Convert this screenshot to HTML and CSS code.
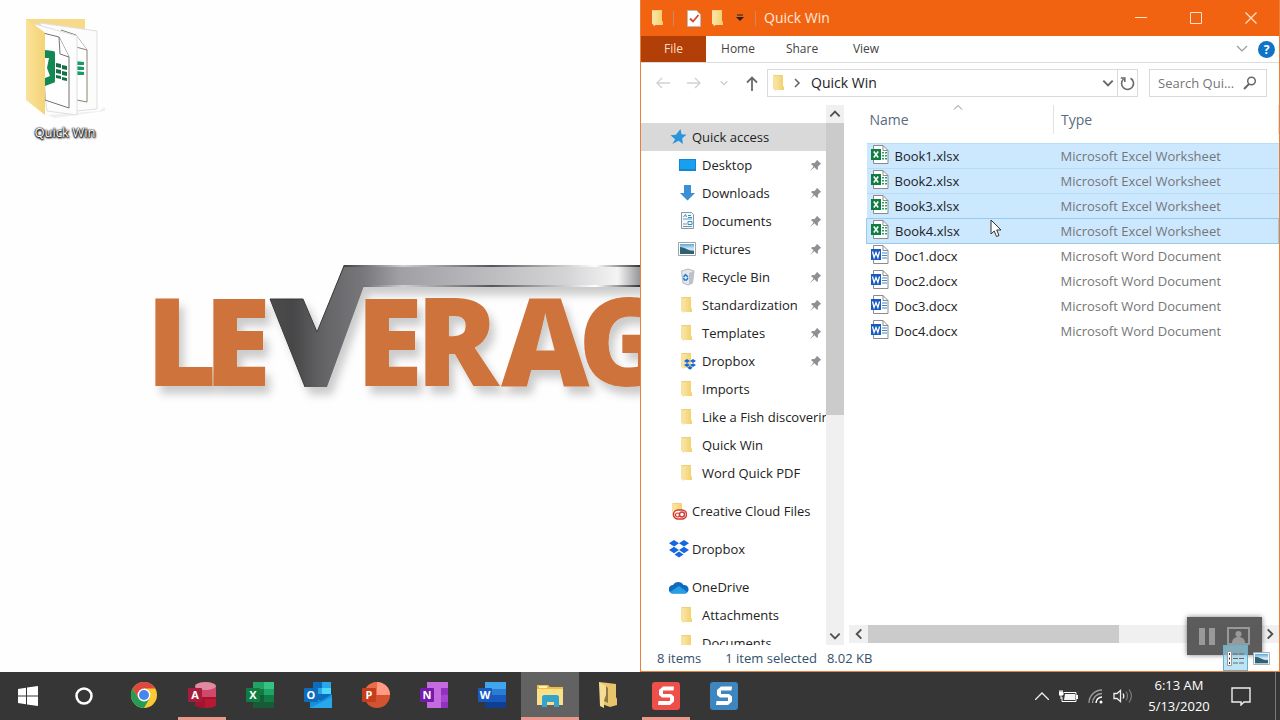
FILE: index.html
```html
<!DOCTYPE html>
<html lang="en">
<head>
<meta charset="utf-8">
<meta name="viewport" content="width=device-width, initial-scale=1">
<title>Quick Win</title>
<link rel="stylesheet" href="styles.css">
</head>
<body>
<svg class="defs" aria-hidden="true">
  <defs>
    <linearGradient id="gold" x1="0" x2="1"><stop offset="0" stop-color="#f9e3a0"/><stop offset="1" stop-color="#f3cf6b"/></linearGradient>
    <linearGradient id="sky" x1="0" y1="0" x2="0" y2="1"><stop offset="0" stop-color="#5aa7dc"/><stop offset=".5" stop-color="#d8ecf5"/><stop offset="1" stop-color="#3f6f6a"/></linearGradient>
  </defs>
  <symbol id="folder" viewBox="0 0 16 18"><path d="M3 1h10v13H3z" fill="#efcf78"/><path d="M3 1l3 1.500v15l-3-3z" fill="#f8e2a2"/><path d="M5.500 2H13v10.500h1V16H5.500z" fill="url(#gold)"/></symbol>
  <symbol id="pin" viewBox="0 0 14 14"><path d="M8.500.8l4.700 4.700-1.400.5-2.300 2.300c.4 1.600.1 2.700-.7 3.500L5.900 9 1 13l3.900-5L2.200 5.300c.9-.8 2-1.100 3.500-.7L8 2.200z" fill="#8b9196"/></symbol>
  <symbol id="dropbox" viewBox="0 0 20 18"><path d="M5 0l5 3.200-5 3.200L0 3.200zM15 0l5 3.200-5 3.200-5-3.200zM5 6.800L10 10l-5 3.200L0 10zM15 6.800l5 3.200-5 3.200-5-3.200zM10 11.600l4.500 2.900L10 17.600l-4.500-3.100z" fill="#1668e0"/></symbol>
  <symbol id="picture" viewBox="0 0 18 14"><path d="M.5.5h17v13H.5z" fill="#fff" stroke="#9aa5ad"/><path d="M2 2h14v10H2z" fill="url(#sky)"/><path d="M2 5c5 0 8 4 14 4v3H2z" fill="#2f6173"/></symbol>
  <symbol id="xlsx" viewBox="0 0 18 20"><path d="M2.500.5h9.500l5 5v13H2.500z" fill="#fff" stroke="#8b8b8b"/><path d="M12 .5v5h5" fill="none" stroke="#8b8b8b"/><path d="M11 7h2v1.500h-2zM14 7h2v1.500h-2zM11 10h2v1.500h-2zM14 10h2v1.500h-2zM11 13h2v1.500h-2zM14 13h2v1.500h-2z" fill="#21a366"/><path d="M0 4h10v11H0z" fill="#107c41"/><path d="M2.800 6.500l4.400 6M7.200 6.500l-4.400 6" stroke="#fff" stroke-width="1.600"/></symbol>
  <symbol id="docx" viewBox="0 0 18 20"><path d="M2.500.5h9.500l5 5v13H2.500z" fill="#fff" stroke="#8b8b8b"/><path d="M12 .5v5h5" fill="none" stroke="#8b8b8b"/><path d="M11 8h5M11 10.500h5M11 13h5" stroke="#3f86cf"/><path d="M0 4h10v11H0z" fill="#185abd"/><path d="M1.500 6.500l1.600 6L5 7.500l1.900 5 1.600-6" fill="none" stroke="#fff" stroke-width="1.300"/></symbol>
  <symbol id="chev" viewBox="0 0 12 12"><path d="M2 4l4 4 4-4" fill="none" stroke="currentColor" stroke-width="1.600"/></symbol>
  <symbol id="snag" viewBox="0 0 28 28"><rect width="28" height="28" rx="3" fill="currentColor"/><path d="M22 4.500H11L7 8v5l3 2.500h8v3.500H6.500l-.5 4h12l4-3.500v-5L19 12h-8V8.500h10.500z" fill="#fff"/></symbol>
</svg>

<main class="desktop">
  <section class="wallpaper">
    <a class="shortcut" href="#">
      <svg viewBox="0 0 80 102" aria-hidden="true">
        <defs><linearGradient id="flap" x1="0" x2="1"><stop offset="0" stop-color="#fbe29a"/><stop offset="1" stop-color="#f3d375"/></linearGradient></defs>
        <path d="M22 98l52-4 6-4v4l-50 7z" fill="#efefef"/>
        <path d="M1 2h59v80H1z" fill="#f6da8a"/>
        <path d="M15 6l57 8v78l-30 3z" fill="#fcfcfc" stroke="#dfdfdf"/>
        <path d="M36 13l15 5 11 15v52l-20-4" fill="#fff" stroke="#8a8272"/>
        <path d="M51 18v12l11 3" fill="#fff" stroke="#8a8272"/>
        <path d="M50 44l9 1v3h-9zM50 49l9 1v3h-9zM50 54l9 1v3h-9z" fill="#179b67"/>
        <path d="M10 7l42 12v79l-30-4z" fill="#fdfdfd" stroke="#dedede"/>
        <path d="M18 16l16 4 10 20v51l-24-8z" fill="#fff" stroke="#77736b"/>
        <path d="M34 20l1 17 9 3" fill="#fff" stroke="#77736b"/>
        <path d="M20 33l8 1q2 0 2 2v28q0 2-2 2l-8 3z" fill="#138850"/>
        <path d="M20 41h4l-2 10 3 8-5 2z" fill="#fff"/>
        <path d="M31 46l5 1v4l-5-1zM37 48l5 1v4l-5-1zM31 52l5 1v4l-5-1zM37 54l5 1v4l-5-1zM31 58l5 1v3l-5-1zM37 60l5 1v3l-5-1z" fill="#176f47"/>
        <path d="M1 2l17 12c2 2 2 3 2 5v79L1 83z" fill="url(#flap)"/>
      </svg>
      <span>Quick Win</span>
    </a>
    <svg class="logo" viewBox="0 0 500 160" role="img" aria-label="Leverage">
      <defs>
        <linearGradient id="steel" gradientUnits="userSpaceOnUse" x1="130" x2="500" y1="0" y2="0"><stop offset="0" stop-color="#4c4c4c"/><stop offset=".06" stop-color="#464647"/><stop offset=".14" stop-color="#636365"/><stop offset=".25" stop-color="#77777b"/><stop offset=".35" stop-color="#a0a0a4"/><stop offset=".8" stop-color="#d4d4d7"/><stop offset=".94" stop-color="#f4f4f4"/><stop offset="1" stop-color="#96969a"/></linearGradient>
        <linearGradient id="edge" gradientUnits="userSpaceOnUse" x1="204" x2="500" y1="0" y2="0"><stop offset="0" stop-color="#404042"/><stop offset=".2" stop-color="#cfcfd1"/><stop offset=".5" stop-color="#555"/><stop offset=".85" stop-color="#fff"/><stop offset="1" stop-color="#333"/></linearGradient>
        <filter id="cast" x="-10%" y="-10%" width="120%" height="130%"><feDropShadow dx="5" dy="8" stdDeviation="4" flood-color="#000" flood-opacity=".2"/></filter>
      </defs>
      <g filter="url(#cast)">
        <g class="logo-text">
          <text x="6" y="136">L</text><text x="64" y="136">E</text>
          <text x="216" y="136">E</text><text x="276" y="136">R</text><text x="361" y="136">A</text><text x="438" y="136">G</text>
        </g>
        <path d="M130 49h33l14 33 27-67h310v21H224L187 137h-22z" fill="url(#steel)"/>
        <path d="M130 49h33l14 33 27-66M165 137L130 49" fill="none" stroke="#3c3c3e"/>
        <path d="M204 15h310v2H203zM224 35h290v2H223z" fill="url(#edge)"/>
      </g>
    </svg>
  </section>

  <section class="window">
    <header class="titlebar">
      <svg class="i-folder"><use href="#folder"/></svg>
      <i class="tick"></i>
      <button class="bare" aria-label="Properties"><svg width="14" height="17" viewBox="0 0 14 17"><path d="M.5.5h9l4 4v12H.5z" fill="#fff" stroke="#bbb"/><path d="M3 8.500l3 3L11.500 5" fill="none" stroke="#d9482b" stroke-width="1.800"/></svg></button>
      <button class="bare" aria-label="New folder"><svg class="i-folder"><use href="#folder"/></svg></button>
      <button class="bare small" aria-label="Customize toolbar"><svg width="8" height="8" viewBox="0 0 8 8"><path d="M1 1h6" stroke="#222"/><path d="M0 3h8L4 7z" fill="#222"/></svg></button>
      <i class="tick"></i>
      <h1>Quick Win</h1>
      <div class="controls">
        <button class="bare" aria-label="Minimize"><svg width="12" height="12" viewBox="0 0 12 12"><path d="M0 5.500h12" stroke="#ffe3d0"/></svg></button>
        <button class="bare" aria-label="Maximize"><svg width="12" height="12" viewBox="0 0 12 12"><path d="M.5.500h11v11H.5z" fill="none" stroke="#ffe3d0"/></svg></button>
        <button class="bare" aria-label="Close"><svg width="12" height="12" viewBox="0 0 12 12"><path d="M.5.500l11 11M11.500.5l-11 11" stroke="#ffe3d0" stroke-width="1.200"/></svg></button>
      </div>
    </header>
    <nav class="ribbon">
      <button class="file">File</button><button>Home</button><button>Share</button><button>View</button>
      <div class="ribbon-end">
        <svg width="12" height="8" viewBox="0 0 12 8"><path d="M1 1l5 5 5-5" fill="none" stroke="#999" stroke-width="1.200"/></svg>
        <button class="help" aria-label="Help">?</button>
      </div>
    </nav>
    <div class="addressbar">
      <div class="arrows">
        <button class="bare" aria-label="Back"><svg width="14" height="12" viewBox="0 0 14 12"><path d="M14 6H1M6 1L1 6l5 5" fill="none" stroke="#d2d2d2" stroke-width="1.400"/></svg></button>
        <button class="bare" aria-label="Forward"><svg width="14" height="12" viewBox="0 0 14 12"><path d="M0 6h13M8 1l5 5-5 5" fill="none" stroke="#d2d2d2" stroke-width="1.400"/></svg></button>
        <button class="bare faint" aria-label="Recent"><svg width="10" height="10"><use href="#chev"/></svg></button>
        <button class="bare" aria-label="Up"><svg width="12" height="15" viewBox="0 0 12 15"><path d="M6 15V1.500M1 6.500l5-5 5 5" fill="none" stroke="#6a6a6a" stroke-width="1.800"/></svg></button>
      </div>
      <div class="path">
        <svg class="i-folder"><use href="#folder"/></svg>
        <svg class="right" width="12" height="12"><use href="#chev"/></svg>
        <span>Quick Win</span>
        <button class="bare" aria-label="Previous locations"><svg width="14" height="14"><use href="#chev"/></svg></button>
        <button class="bare refresh" aria-label="Refresh"><svg width="15" height="15" viewBox="0 0 15 15"><path d="M10.500 2.200A6 6 0 1 1 3.500 3M.8 2h4v4" fill="none" stroke="#6a6a6a" stroke-width="1.600"/></svg></button>
      </div>
      <label class="search"><input type="text" placeholder="Search Qui..." aria-label="Search Quick Win">
        <svg width="14" height="14" viewBox="0 0 14 14"><circle cx="8.500" cy="5" r="3.800" fill="none" stroke="#666" stroke-width="1.500"/><path d="M6 8L1 13" stroke="#666" stroke-width="2"/></svg></label>
    </div>

    <div class="content">
      <nav class="tree">
        <a class="top selected" href="#"><svg width="18" height="16" viewBox="0 0 18 16"><path d="M11.500 0l1 5.300 5 .4-4.200 3.500.5 5.800-4.200-3.200L3.400 15l2.700-4.800L1.500 6.200l5.400-.5z" fill="#2b95dc"/></svg><span>Quick access</span></a>
        <a href="#"><svg width="18" height="14" viewBox="0 0 18 14"><path d="M1 1h17v12H1z" fill="#1185d8"/><path d="M2 2h15v9H2z" fill="#18a0ee"/></svg><span>Desktop</span><svg class="pin"><use href="#pin"/></svg></a>
        <a href="#"><svg width="18" height="16" viewBox="0 0 18 16"><path d="M6 0h7v8h4l-7.500 7.500L2 8h4z" fill="#3c8fd4"/></svg><span>Downloads</span><svg class="pin"><use href="#pin"/></svg></a>
        <a href="#"><svg width="18" height="18" viewBox="-2 0 18 18"><path d="M1.500.5h10l2 2v14h-12z" fill="#f6f9fb" stroke="#8a97a0"/><path d="M3 7h9M3 12h4M3 14.500h9" stroke="#7893a5"/><path d="M3.500 5l2-2.500 1 2.500M8 3.500h3M8 5.500h4M8 9.500h4v3H8z" fill="none" stroke="#2b95c8"/></svg><span>Documents</span><svg class="pin"><use href="#pin"/></svg></a>
        <a href="#"><svg width="18" height="14"><use href="#picture"/></svg><span>Pictures</span><svg class="pin"><use href="#pin"/></svg></a>
        <a href="#"><svg width="18" height="18" viewBox="-2 0 18 18"><path d="M1.500 3L8 1l6 2-1.500 12L8 17l-5-2z" fill="#e4e8eb" stroke="#b1b8bd"/><path d="M9 5l5-2-1.500 12L9 16.500z" fill="#bcc3c8"/><path d="M3.500 9l2-2.500L8 9M8 10l-1.500 2h-2L3.500 10" fill="none" stroke="#1f7fd0" stroke-width="1.500"/></svg><span>Recycle Bin</span><svg class="pin"><use href="#pin"/></svg></a>
        <a href="#"><svg class="i-folder"><use href="#folder"/></svg><span>Standardization</span><svg class="pin"><use href="#pin"/></svg></a>
        <a href="#"><svg class="i-folder"><use href="#folder"/></svg><span>Templates</span><svg class="pin"><use href="#pin"/></svg></a>
        <a href="#"><svg width="18" height="18" viewBox="0 0 18 18"><use href="#folder" width="16" height="18"/><use href="#dropbox" x="6" y="7" width="12" height="11"/></svg><span>Dropbox</span><svg class="pin"><use href="#pin"/></svg></a>
        <a href="#"><svg class="i-folder"><use href="#folder"/></svg><span>Imports</span></a>
        <a href="#"><svg class="i-folder"><use href="#folder"/></svg><span>Like a Fish discovering</span></a>
        <a href="#"><svg class="i-folder"><use href="#folder"/></svg><span>Quick Win</span></a>
        <a href="#"><svg class="i-folder"><use href="#folder"/></svg><span>Word Quick PDF</span></a>
        <a class="top gap" href="#"><svg width="18" height="18" viewBox="0 0 18 18"><use href="#folder" width="16" height="17"/><rect x="4.500" y="8" width="13" height="9" rx="4.500" fill="#fff" stroke="#d5392f" stroke-width="1.500"/><circle cx="13" cy="12.500" r="2.500" fill="none" stroke="#d5392f" stroke-width="1.400"/><circle cx="8.500" cy="13" r="2" fill="none" stroke="#d5392f" stroke-width="1.200"/></svg><span>Creative Cloud Files</span></a>
        <a class="top gap" href="#"><svg width="20" height="18"><use href="#dropbox"/></svg><span>Dropbox</span></a>
        <a class="top gap" href="#"><svg width="20" height="13" viewBox="0 0 20 13"><path d="M4 12.500a4.200 4.200 0 0 1 0-8.500A6 6 0 0 1 14.500 4 4.300 4.300 0 0 1 16 12.500z" fill="#0f6cbd"/><path d="M1 11l9-6 8 6c-.6 1-1 1.500-2 1.500H4c-1.300 0-2.300-.5-3-1.500z" fill="#23a0e8"/></svg><span>OneDrive</span></a>
        <a href="#"><svg class="i-folder"><use href="#folder"/></svg><span>Attachments</span></a>
        <a href="#"><svg class="i-folder"><use href="#folder"/></svg><span>Documents</span></a>
      </nav>
      <div class="vscroll">
        <button class="bare" aria-label="Scroll up"><svg class="up" width="14" height="14"><use href="#chev"/></svg></button>
        <div class="vtrack"><div class="vthumb"></div></div>
        <button class="bare" aria-label="Scroll down"><svg width="14" height="14"><use href="#chev"/></svg></button>
      </div>
      <div class="files">
        <table>
          <colgroup><col class="c-name"><col></colgroup>
          <thead><tr><th>Name<svg class="sort" width="10" height="5" viewBox="0 0 10 5"><path d="M1 4.500l4-4 4 4" fill="none" stroke="#888"/></svg></th><th>Type</th></tr></thead>
          <tbody>
            <tr class="sel"><td><svg><use href="#xlsx"/></svg>Book1.xlsx</td><td>Microsoft Excel Worksheet</td></tr>
            <tr class="sel"><td><svg><use href="#xlsx"/></svg>Book2.xlsx</td><td>Microsoft Excel Worksheet</td></tr>
            <tr class="sel"><td><svg><use href="#xlsx"/></svg>Book3.xlsx</td><td>Microsoft Excel Worksheet</td></tr>
            <tr class="sel focus"><td><svg><use href="#xlsx"/></svg>Book4.xlsx</td><td>Microsoft Excel Worksheet</td></tr>
            <tr><td><svg><use href="#docx"/></svg>Doc1.docx</td><td>Microsoft Word Document</td></tr>
            <tr><td><svg><use href="#docx"/></svg>Doc2.docx</td><td>Microsoft Word Document</td></tr>
            <tr><td><svg><use href="#docx"/></svg>Doc3.docx</td><td>Microsoft Word Document</td></tr>
            <tr><td><svg><use href="#docx"/></svg>Doc4.docx</td><td>Microsoft Word Document</td></tr>
          </tbody>
        </table>
        <div class="hscroll">
          <button class="bare" aria-label="Scroll left"><svg class="left" width="14" height="14"><use href="#chev"/></svg></button>
          <div class="htrack"><div class="hthumb"></div></div>
          <button class="bare" aria-label="Scroll right"><svg class="right" width="14" height="14"><use href="#chev"/></svg></button>
        </div>
        <svg class="cursor" viewBox="0 0 12 19" aria-hidden="true"><path d="M1 1v14l3.200-3 2.300 5.500 2.500-1L6.700 11H11z" fill="#fff" stroke="#333"/></svg>
      </div>
    </div>
    <footer class="status">
      <span>8 items</span><span>1 item selected</span><span>8.02 KB</span>
      <div class="views">
        <button class="details" aria-label="Details view"><svg width="18" height="15" viewBox="0 0 18 15"><path d="M.5.500h4v14h-4z" fill="#fff" stroke="#999"/><path d="M2 3h1M2 7.500h1M2 12h1" stroke="#333" stroke-width="2"/><path d="M6 3h5M12 3h5M6 7.500h5M12 7.500h5M6 12h5M12 12h5" stroke="#666"/></svg></button>
        <button class="bare" aria-label="Large icons view"><svg width="17" height="13"><use href="#picture"/></svg></button>
      </div>
    </footer>
    <div class="recorder">
      <button class="bare" aria-label="Pause"><svg width="17" height="17" viewBox="0 0 17 17"><path d="M0 0h6v17H0zM10 0h6v17h-6z" fill="#999"/></svg></button>
      <button class="bare" aria-label="Webcam"><svg width="23" height="18" viewBox="0 0 23 18"><path d="M1 1h21v16H1z" fill="none" stroke="#999" stroke-width="2"/><circle cx="11.500" cy="7" r="3" fill="#999"/><path d="M5 16c0-4 3-6 6.500-6s6.500 2 6.500 6z" fill="#999"/></svg></button>
    </div>
  </section>
</main>

<footer class="taskbar">
  <button class="sys" aria-label="Start"><svg width="20" height="20" viewBox="0 0 20 20"><path d="M0 3l8-1.200v7.700H0zM9 1.600L20 0v9.500H9zM0 10.500h8v7.700L0 17zM9 10.500h11V20L9 18.400z" fill="#fff"/></svg></button>
  <button class="sys" aria-label="Search"><svg width="18" height="18" viewBox="0 0 18 18"><circle cx="9" cy="9" r="7.500" fill="none" stroke="#fff" stroke-width="2.500"/></svg></button>
  <div class="apps">
    <button aria-label="Chrome"><svg viewBox="0 0 26 26"><circle cx="13" cy="13" r="13" fill="#fbc934"/><path d="M1.700 6.500l5.700 9.700L18.600 16.300 13 26A13 13 0 0 1 1.700 6.500z" fill="#249c54"/><path d="M1.700 6.500L7.400 16.200 13 13V6.500h11.300A13 13 0 0 0 1.700 6.500z" fill="#dd4a3d"/><circle cx="13" cy="13" r="6.400" fill="#fff"/><circle cx="13" cy="13" r="5" fill="#4786ec"/></svg></button>
    <button class="running" aria-label="Access"><svg viewBox="0 0 28 26"><path d="M7 3v20c0 4 21 4 21 0V3z" fill="#a4142f"/><path d="M7 4v11h21V4z" fill="#d0486c"/><ellipse cx="17.500" cy="4" rx="10.500" ry="4" fill="#e08aa0"/><path d="M17 17h11v6c-1 2-5 3-11 3z" fill="#b51a32"/><rect y="6" width="14" height="14" rx="1" fill="#a51d3c"/><text x="7" y="17">A</text></svg></button>
    <button aria-label="Excel"><svg viewBox="0 0 28 26"><path d="M7 0h21v26H7z" fill="#185c37"/><path d="M7 0h11v7H7z" fill="#21a366"/><path d="M18 0h10v7H18z" fill="#33c481"/><path d="M7 7h11v6H7z" fill="#107c41"/><path d="M18 7h10v6H18z" fill="#21a366"/><path d="M18 13h10v7H18z" fill="#107c41"/><rect y="6" width="14" height="14" rx="1" fill="#107c41"/><text x="7" y="17">X</text></svg></button>
    <button aria-label="Outlook"><svg viewBox="0 0 28 26"><path d="M9 0h18v20H9z" fill="#0f6cbd"/><path d="M18 0h9v6h-9zM9 6h9v6H9z" fill="#28a8ea"/><path d="M18 6h9v6h-9z" fill="#50d9ff"/><path d="M6 13l11 6 11-7v14H6z" fill="#1490df"/><path d="M6 26l22-11v11z" fill="#28a8ea"/><rect y="6" width="14" height="14" rx="1" fill="#0f6cbd"/><text x="7" y="17">O</text></svg></button>
    <button aria-label="PowerPoint"><svg viewBox="0 0 28 26"><circle cx="15" cy="13" r="13" fill="#d35230"/><path d="M15 0a13 13 0 0 1 13 13H15z" fill="#ff9b82"/><path d="M15 0A13 13 0 0 0 2 13h13z" fill="#ec6c4a"/><rect y="6" width="14" height="14" rx="1" fill="#c43e1c"/><text x="7" y="17">P</text></svg></button>
    <button aria-label="OneNote"><svg viewBox="0 0 28 26"><path d="M7 0h21v26H7z" fill="#c46be0"/><path d="M21 6h7v7h-7zM21 20h7v6h-7z" fill="#9332bf"/><path d="M21 13h7v7h-7z" fill="#a844d0"/><rect y="6" width="14" height="14" rx="1" fill="#7719aa"/><text x="7" y="17">N</text></svg></button>
    <button aria-label="Word"><svg viewBox="0 0 28 26"><path d="M7 0h21v7H7z" fill="#41a5ee"/><path d="M7 7h21v6H7z" fill="#2b7cd3"/><path d="M7 13h21v7H7z" fill="#185abd"/><path d="M7 20h21v6H7z" fill="#103f91"/><rect y="6" width="14" height="14" rx="1" fill="#185abd"/><text x="7" y="17">W</text></svg></button>
    <button class="active" aria-label="File Explorer"><svg viewBox="0 0 28 26"><path d="M1 3h11l2 2h13v18H1z" fill="#f0bd3c"/><path d="M1 7h26v16H1z" fill="#fbe08c"/><path d="M3 4h8v2H3z" fill="#fff0bd"/><path d="M6 15c0-1 1-2 2-2h13c1 0 2 1 2 2v10h-5v-5h-7v5H6z" fill="#36a3cc"/></svg></button>
    <button aria-label="Folder"><svg viewBox="0 0 28 26"><path d="M5 0l9 1 8 1v13l1 2v6l-7 2-8-3z" fill="#e8c56c"/><path d="M5 0l7 4v9l-2 4v9l-4-2z" fill="#f6dd96"/><path d="M12 4l2 2v15l-4-2 2-6z" fill="#8f7a46"/></svg></button>
    <button class="running red" aria-label="Camtasia"><svg viewBox="0 0 28 28"><use href="#snag"/></svg></button>
    <button class="blue" aria-label="Snagit"><svg viewBox="0 0 28 28"><use href="#snag"/></svg></button>
  </div>
  <div class="tray">
    <button class="bare" aria-label="Hidden icons"><svg width="14" height="8" viewBox="0 0 14 8"><path d="M0 8l7-7 7 7" fill="none" stroke="#eee" stroke-width="1.300"/></svg></button>
    <svg width="19" height="13" viewBox="0 0 19 13"><path d="M5 2.500h12v9H3V7" fill="none" stroke="#fff"/><path d="M6 4h10v6H5z" fill="#f4f4f4"/><path d="M18 5v4" stroke="#fff" stroke-width="2"/><path d="M0 2h4v3H0zM1 0v2M3 0v2M2 5v4" stroke="#fff" fill="#fff"/></svg>
    <svg width="15" height="15" viewBox="0 0 15 15" fill="none"><path d="M1 14A13 13 0 0 1 14 1M4.500 14A9.500 9.500 0 0 1 14 4.500" stroke="#a0a0a0" stroke-width="1.300"/><path d="M8 14a6 6 0 0 1 6-6" stroke="#fff" stroke-width="1.500"/><circle cx="13" cy="13" r="1.500" fill="#fff"/></svg>
    <svg width="20" height="14" viewBox="0 0 20 14" fill="none"><path d="M1 4.500h3l3.500-3v11L4 9.500H1z" stroke="#eee" stroke-width="1.300"/><path d="M10 4.500c1 1.500 1 3.500 0 5" stroke="#eee" stroke-width="1.300"/><path d="M13 2.500c2 3 2 6 0 9M16 .5c3 4 3 9 0 13" stroke="#7d7d7d" stroke-width="1.200"/></svg>
    <div class="clock"><span>6:13 AM</span><span>5/13/2020</span></div>
    <button class="bare notify" aria-label="Notifications"><svg width="20" height="19" viewBox="0 0 20 19"><path d="M1 1h18v14h-6l-3 3v-3H1z" fill="none" stroke="#eee" stroke-width="1.400"/></svg></button>
    <button class="peek" aria-label="Show desktop"></button>
  </div>
</footer>
</body>
</html>
```

FILE: styles.css
```css
* { box-sizing: border-box; }
body {
  margin: 0;
  height: 100vh;
  display: grid;
  grid-template-rows: minmax(0, 1fr) 48px;
  font: 14px/20px "Open Sans", "Noto Sans", sans-serif;
  color: #222;
  background: #fefefe;
  overflow: hidden;
}
svg { display: block; flex: none; }
.defs { position: absolute; width: 0; height: 0; }
button { font: inherit; color: inherit; border: 0; background: none; padding: 0; }
.bare { display: grid; place-items: center; }
a { color: inherit; text-decoration: none; }
.i-folder { width: 16px; height: 18px; }
.right { transform: rotate(-90deg); }
.left { transform: rotate(90deg); }
.up { transform: rotate(180deg); }

.desktop { display: grid; grid-template-columns: 1fr 1fr; min-height: 0; }
.wallpaper { display: flex; flex-direction: column; min-width: 0; padding: 17px 0 0 25px; overflow: hidden; }
.shortcut { width: 80px; display: flex; flex-direction: column; align-items: center; gap: 3px; }
.shortcut svg { width: 80px; height: 102px; }
.shortcut span {
  font-size: 13px;
  color: #fff;
  text-shadow: 0 0 2px #000, 0 1px 2px #000, 1px 1px 2px #000, 0 0 1px #000;
}
.logo { width: 500px; margin: 108px 0 0 auto; }
.logo-text { font: 800 122px "Open Sans", sans-serif; fill: #cd733a; }

.window {
  position: relative;
  display: flex;
  flex-direction: column;
  min-width: 0;
  min-height: 0;
  border: solid #e8803c;
  border-width: 0 1px 1px;
  background: #fff;
}
.titlebar { display: flex; align-items: center; gap: 8px; height: 36px; padding-left: 8px; background: #f26311; color: #ffe9da; }
.titlebar h1 { margin: 0; font-size: 14px; font-weight: 400; }
.tick { width: 1px; height: 15px; margin-right: 5px; background: #c98a60; }
.small { width: 14px; }
.small + .tick { margin: 0; }
.controls { display: flex; margin-left: auto; padding-right: 1px; }
.controls button { width: 55px; height: 36px; }
.ribbon { display: flex; height: 27px; border-bottom: 1px solid #dcdcdc; font-size: 12px; color: #444; }
.ribbon button { width: 64px; }
.ribbon .file { width: 65px; background: #b23f07; color: #ffdcc5; }
.ribbon-end { display: flex; align-items: center; gap: 10px; margin-left: auto; padding-right: 4px; }
.ribbon .help { width: 17px; height: 17px; border-radius: 50%; background: #1173c7; color: #fff; font-weight: 700; line-height: 17px; }
.addressbar { display: flex; padding: 6px 12px 8px 11px; height: 42px; }
.arrows { display: flex; align-items: center; justify-content: space-between; width: 106px; padding-left: 4px; margin-right: 9px; }
.faint { color: #ccc; }
.path { flex: 1; display: flex; align-items: center; gap: 5px; padding-left: 2px; min-width: 0; border: 1px solid #d9d9d9; color: #666; }
.path span { flex: 1; color: #222; padding-left: 3px; }
.refresh { width: 20px; height: 26px; margin-left: -3px; border-left: 1px solid #d9d9d9; }
.search { display: flex; align-items: center; width: 118px; margin-left: 11px; padding: 0 9px 0 8px; border: 1px solid #d9d9d9; }
.search input { flex: 1; width: 0; border: 0; padding: 0; font: inherit; font-size: 13px; outline: 0; }
.search input::placeholder { color: #767676; opacity: 1; }

.content { flex: 1; display: grid; grid-template-columns: 185px 18px minmax(0, 1fr); min-height: 0; }
.tree { padding-top: 18px; overflow: hidden; font-size: 13px; }
.tree a {
  display: grid;
  grid-template-columns: 24px minmax(0, 1fr) auto;
  align-items: center;
  height: 28px;
  padding: 0 4px 0 37px;
  white-space: nowrap;
}
.tree .top { padding-left: 28px; grid-template-columns: 23px minmax(0, 1fr); }
.tree .selected { background: #d9d9d9; }
.tree .gap { margin-top: 10px; }
.pin { width: 13px; height: 13px; }
.vscroll { display: flex; flex-direction: column; background: #f0f0f0; color: #505050; }
.vscroll button { height: 18px; }
.vtrack { flex: 1; }
.vthumb { height: 58%; background: #cbcbcb; }
.files { position: relative; display: flex; flex-direction: column; justify-content: space-between; padding: 0 0 2px 22px; min-width: 0; }
table { width: 100%; border-collapse: collapse; table-layout: fixed; }
.c-name { width: 187px; }
th { position: relative; height: 29px; padding: 0 0 0 3px; text-align: left; font-weight: 400; color: #5a6b80; border-right: 1px solid #e2e2e2; }
th + th, td + td { padding-left: 7px; }
.sort { position: absolute; left: 86px; top: 0; }
thead::after { content: ""; display: block; height: 9px; }
td { height: 25px; padding: 0; font-size: 13px; white-space: nowrap; }
td:first-child { padding-left: 28px; position: relative; }
td svg { position: absolute; left: 4px; top: 1px; width: 18px; height: 20px; }
td + td { color: #767676; }
.sel { background: #cce8ff; border-top: 1px solid #b9dcf5; }
.focus { border: 1px solid #99c9ec; }
.hscroll { display: flex; height: 18px; margin-left: -17px; background: #f0f0f0; color: #505050; }
.hscroll button { width: 19px; }
.htrack { flex: 1; }
.hthumb { width: 64%; height: 18px; background: #cbcbcb; }
.cursor { position: absolute; left: 146px; top: 114px; width: 12px; height: 19px; }
.status { display: flex; align-items: center; height: 26px; padding-left: 16px; font-size: 13px; color: #33506b; }
.status span:nth-child(2) { margin: 0 10px 0 24px; }
.views { position: relative; z-index: 2; display: flex; margin-left: auto; padding-right: 9px; gap: 5px; }
.details { display: grid; place-items: center; width: 25px; height: 26px; border: 1px solid #62b1d0; background: rgba(150, 213, 240, .65); }
.recorder { position: absolute; right: 17px; bottom: 16px; width: 75px; height: 38px; display: flex; align-items: center; justify-content: space-evenly; background: rgba(70, 70, 70, .88); box-shadow: 0 0 5px rgba(0, 0, 0, .5); }

.taskbar { display: flex; background: #363636; color: #fff; }
.taskbar button { display: grid; place-items: center; }
.sys { width: 56px; }
.apps { display: flex; margin-left: 3px; }
.apps button { width: 58px; border-bottom: 3px solid transparent; }
.apps svg { width: 28px; height: 26px; }
.apps text { font: 700 11px "Open Sans", sans-serif; fill: #fff; text-anchor: middle; }
.apps .running { background: linear-gradient(#e9988b, #e9988b) center bottom / 48px 3px no-repeat border-box; }
.apps .active { background: #626262; border-bottom-color: #e9988b; }
.apps .red, .apps .blue { padding-top: 2px; }
.red { color: #ee4f49; }
.blue { color: #3d86c0; }
.apps .red svg, .apps .blue svg { height: 28px; }
.tray { display: flex; align-items: center; gap: 10px; margin-left: auto; }
.clock { display: flex; flex-direction: column; align-items: center; width: 72px; font-size: 13px; line-height: 21px; }
.notify { width: 32px; }
.tray .peek { align-self: stretch; width: 5px; margin-left: 8px; border-left: 1px solid #777; }
```
